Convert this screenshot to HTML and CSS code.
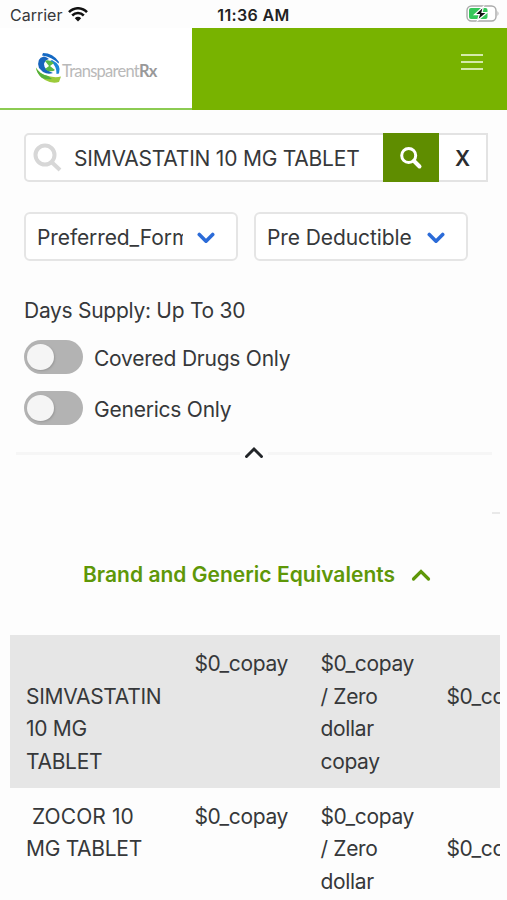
FILE: index.html
```html
<!DOCTYPE html>
<html lang="en">
<head>
<meta charset="utf-8">
<title>TransparentRx</title>
<link rel="stylesheet" href="styles.css">
</head>
<body>
<div class="status">
  <div class="status-left"><span class="carrier">Carrier</span>
    <svg width="20" height="15" viewBox="0 0 20 15" fill="none" stroke="#111" stroke-width="2.5"><path d="M1 5.2C6-.1 14-.1 19 5.2M4.2 8.5c3.3-3.3 8.3-3.3 11.6 0"/><path d="M6.8 11.2c1.8-1.8 4.6-1.8 6.4 0L10 14.5z" fill="#111" stroke="none"/></svg>
  </div>
  <div class="time">11:36 AM</div>
  <svg class="battery" width="34" height="18" viewBox="0 0 34 18"><rect x="1" y="1" width="29" height="15" rx="4.5" fill="#fff" stroke="#a9a9a9" stroke-width="1.4"/><path d="M31.5 6q2 2.500 0 5z" fill="#a9a9a9"/><rect x="3" y="3" width="18.500" height="11" rx="2" fill="#35c759"/><path d="M17.500 1.500 8.500 9.700h4.800L11.500 15.500l9.500-8h-5z" fill="#111" stroke="#fff" stroke-width="1.200"/></svg>
</div>
<header class="header">
  <div class="brand">
    <svg width="27" height="32" viewBox="0 0 27 32"><path d="M8 1Q18 1 24 10L23.500 11.500Q17 5 7 3.500z" fill="#1469c4"/><path d="M9 4.500Q1 6 4 16L8 20Q13 23 18 21Q9 18 9 12Q10 8 14 7Q12 5 9 4.500z" fill="#1764bd"/><path d="M17 8Q27 13 24 21.500L21.500 22Q22 14 15 9z" fill="#1b86d8"/><path d="M10 9Q14 7 19 11L15 14 20 18Q18 20 13 19L10 17 14 14z" fill="#57b947"/><path d="M1 15.500Q4 22 13 24Q20 26 26 24.500L24 30Q17 32 10 28Q2 23 1 15.500z" fill="#9ccb3a"/><path d="M1 15.500Q4 22 13 24L17 27Q12 28 7 26Q2 22 1 15.500z" fill="#56b13c"/></svg>
    <span class="brand-name">Transparent<b>Rx</b></span>
  </div>
  <div class="menu"><i></i><i></i><i></i></div>
</header>
<main class="filters">
  <div class="search">
    <svg class="search-hint" width="30" height="30" viewBox="0 0 30 30" fill="none" stroke="#d7d7d7" stroke-width="4"><circle cx="12" cy="12" r="9.500"/><path d="M18.500 19l8.500 8"/></svg>
    <span class="query">SIMVASTATIN 10 MG TABLET</span>
    <span class="go"><svg width="24" height="24" viewBox="0 0 24 24" fill="none" stroke="#fff"><circle cx="9.700" cy="9.500" r="7" stroke-width="3"/><path d="M15 15l5.500 5.500" stroke-width="4" stroke-linecap="round"/></svg></span>
    <span class="clear">X</span>
  </div>
  <div class="selects">
    <div class="select"><span class="value">Preferred_Formulary</span><svg width="18" height="13" viewBox="0 0 18 13"><path d="M2.300 2.500 9 9.200l6.700-6.700" fill="none" stroke="#2b6bd8" stroke-width="3.600" stroke-linecap="round" stroke-linejoin="round"/></svg></div>
    <div class="select"><span class="value">Pre Deductible</span><svg width="18" height="13" viewBox="0 0 18 13"><path d="M2.300 2.500 9 9.200l6.700-6.700" fill="none" stroke="#2b6bd8" stroke-width="3.600" stroke-linecap="round" stroke-linejoin="round"/></svg></div>
  </div>
  <div class="supply">Days Supply: Up To 30</div>
  <div class="option"><span class="toggle"><i></i></span><span class="label">Covered Drugs Only</span></div>
  <div class="option"><span class="toggle"><i></i></span><span class="label">Generics Only</span></div>
</main>
<div class="divider"><i></i><svg width="20" height="14" viewBox="0 0 20 14"><path d="M2.500 10.500 10 3l7.500 7.500" fill="none" stroke="#222529" stroke-width="2.900" stroke-linecap="round"/></svg><i></i></div>
<div class="rule"></div>
<h2 class="title"><span>Brand and Generic Equivalents</span><svg width="20" height="14" viewBox="0 0 20 14"><path d="M2.500 10 10 2.500 17.500 10" fill="none" stroke="#5e9708" stroke-width="3.200" stroke-linecap="round"/></svg></h2>
<section class="table">
  <div class="row shaded">
    <div class="cell caps"><br>SIMVASTATIN<br>10 MG<br>TABLET</div>
    <div class="cell">$0_copay</div>
    <div class="cell">$0_copay<br>/ Zero<br>dollar<br>copay</div>
    <div class="cell"><br>$0_copay</div>
  </div>
  <div class="row">
    <div class="cell caps"><span class="indent">ZOCOR 10</span><br>MG TABLET</div>
    <div class="cell">$0_copay</div>
    <div class="cell">$0_copay<br>/ Zero<br>dollar</div>
    <div class="cell"><br>$0_copay</div>
  </div>
</section>
</body>
</html>
```

FILE: styles.css
```css
* { box-sizing: border-box; }
body {
  margin: 0;
  height: 900px;
  overflow: hidden;
  background: #fdfdfd;
  color: #36383a;
  font: 21px/32.4px Inter, sans-serif;
  letter-spacing: -0.1px;
}
svg { display: block; flex: none; }
.status {
  height: 28px;
  padding: 0 7px 0 10px;
  display: grid;
  grid-template-columns: 1fr auto 1fr;
  align-items: center;
  line-height: 28px;
}
.status-left { display: flex; align-items: center; gap: 6px; }
.carrier { font-size: 16px; letter-spacing: 0; padding-top: 1px; }
.time { font-size: 16px; font-weight: 600; color: #222; letter-spacing: 0.35px; padding-top: 1px; margin-left: -3px; }
.battery { justify-self: end; margin-bottom: 1px; }
.header {
  height: 82px;
  display: flex;
  justify-content: space-between;
  background: #78b300;
}
.brand {
  width: 192px;
  background: #fff;
  border-bottom: 2px solid #8ccb52;
  padding: 0 0 1px 35px;
  display: flex;
  align-items: center;
}
.brand-name {
  font: 16.5px/24px Lato, sans-serif;
  color: #b9b9b9;
  letter-spacing: -0.75px;
  padding-top: 6px;
}
.brand-name b { color: #999; }
.menu { padding: 26px 24px 0 0; display: flex; flex-direction: column; gap: 5px; }
.menu i { width: 22px; height: 2px; background: #d5eaaa; }
.filters { padding: 23px 19px 0 24px; }
.search {
  height: 49px;
  display: flex;
  align-items: center;
  border: 2px solid #e3e3e3;
  border-radius: 5px 0 0 5px;
  background: #fff;
}
.search-hint { margin-left: 7px; }
.query { margin-left: 11px; padding-top: 3px; flex: 1; white-space: nowrap; letter-spacing: -0.22px; }
.go {
  width: 56px;
  height: 49px;
  background: #5f8d00;
  display: flex;
  align-items: center;
  justify-content: center;
}
.clear { width: 47px; padding-top: 3px; text-align: center; font-weight: 600; color: #2b2d30; }
.selects { display: flex; gap: 16px; margin-top: 30px; }
.select {
  width: 214px;
  height: 49px;
  border: 2px solid #e5e5e5;
  border-radius: 6px;
  background: #fff;
  padding-left: 11px;
  display: flex;
  align-items: center;
}
.select svg { margin-top: 3px; }
.value { width: 146px; padding-top: 4px; overflow: hidden; white-space: nowrap; margin-right: 14px; }
.supply { margin-top: 33px; padding-top: 1px; letter-spacing: -0.28px; }
.option { display: flex; align-items: center; gap: 11px; height: 34px; margin-top: 17px; }
.supply + .option { margin-top: 13px; }
.label { letter-spacing: -0.23px; padding-top: 3px; }
.toggle { width: 59px; height: 34px; border-radius: 17px; background: #b3b3b3; padding: 4px 3px; }
.toggle i {
  display: block;
  width: 27px;
  height: 26px;
  border-radius: 50%;
  background: #f5f5f5;
  box-shadow: 1px 1px 2px #999;
}
.divider { display: flex; align-items: center; height: 14px; margin: 21px 15px 0 16px; gap: 4px; }
.divider i { flex: 1; height: 3px; background: #f6f6f6; }
.rule { width: 8px; height: 2px; margin: 52px 7px 0 auto; background: #e9e9e9; }
.title {
  margin: 45px 0 0 83px;
  font-size: 21px;
  font-weight: 600;
  letter-spacing: 0.02px;
  color: #5e9708;
  display: flex;
  align-items: center;
  gap: 16px;
  white-space: nowrap;
}
.table { margin: 43px 7px 0 10px; overflow: hidden; }
.row {
  display: grid;
  grid-template-columns: 168.500px 126px 126px 126px;
  padding: 13.500px 0 10px 16px;
}
.shaded { background: #e6e6e6; height: 153px; }
.shaded + .row { padding-top: 13px; }
.cell { white-space: nowrap; letter-spacing: -0.35px; }
.caps { letter-spacing: -0.3px; }
.indent { padding-left: 6px; letter-spacing: 0.1px; }
```
